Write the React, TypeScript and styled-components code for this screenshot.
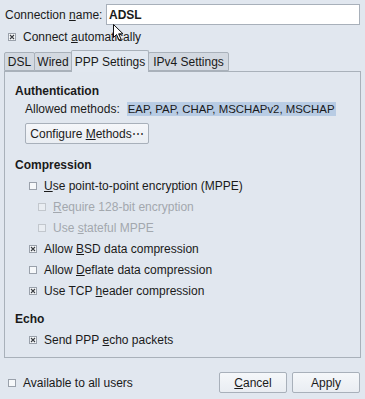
import React from "react";
import styled, { createGlobalStyle } from "styled-components";

const GlobalStyle = createGlobalStyle`
  html, body { margin: 0; padding: 0; }
  body {
    background: #e1e7ef;
    font-family: "Liberation Sans", Arial, sans-serif;
    font-size: 12px;
    color: #1a1a1a;
  }
`;

const Window = styled.div`
  position: relative;
  width: 365px;
  height: 399px;
  box-sizing: border-box;
  padding: 4px 4px 0 4px;
  display: flex;
  flex-direction: column;
  background: #e1e7ef;
`;

const NameRow = styled.div`
  display: flex;
  align-items: center;
  height: 21px;
`;

const Label = styled.span`
  width: 101px;
  padding-left: 1px;
`;

const TextInput = styled.div`
  flex: 1;
  height: 21px;
  box-sizing: border-box;
  margin-right: 1px;
  background: #ffffff;
  border: 1px solid #a8b0ba;
  display: flex;
  align-items: center;
  padding-left: 2px;
  font-weight: bold;
`;

const CheckRow = styled.div<{ $indent: number; $h?: number; $top?: number; $disabled?: boolean }>`
  display: flex;
  align-items: center;
  gap: 7px;
  height: ${(p) => p.$h ?? 21}px;
  margin-top: ${(p) => p.$top ?? 0}px;
  padding-left: ${(p) => p.$indent}px;
  color: ${(p) => (p.$disabled ? "#a3a8ae" : "#1a1a1a")};
`;

const Box = styled.span<{ $disabled?: boolean }>`
  width: 8px;
  height: 8px;
  box-sizing: border-box;
  border: 1px solid ${(p) => (p.$disabled ? "#c2c7cd" : "#9aa1ab")};
  background: ${(p) => (p.$disabled ? "#e9edf2" : "#f6f8fa")};
  display: flex;
  align-items: center;
  justify-content: center;
`;

const TabBar = styled.div`
  display: flex;
  align-items: flex-end;
  height: 21px;
  margin-top: 4px;
  position: relative;
  z-index: 1;
`;

const Tab = styled.div<{ $active?: boolean; $w: number }>`
  width: ${(p) => p.$w}px;
  box-sizing: border-box;
  height: ${(p) => (p.$active ? 22 : 19)}px;
  margin-bottom: ${(p) => (p.$active ? -1 : 0)}px;
  margin-left: -1px;
  border: 1px solid #a9b1ba;
  border-bottom: ${(p) => (p.$active ? "none" : "1px solid #a9b1ba")};
  border-radius: 2px 2px 0 0;
  background: ${(p) => (p.$active ? "#e2e8f0" : "#d3d9e1")};
  display: flex;
  align-items: center;
  justify-content: center;
  padding-top: 1px;
  &:first-child { margin-left: 0; }
`;

const Panel = styled.div`
  height: 287px;
  box-sizing: border-box;
  border: 1px solid #a9b1ba;
  background: #e1e7ef;
  padding: 11px 0 0 10px;
  display: flex;
  flex-direction: column;
`;

const Header = styled.div<{ $top?: number }>`
  font-weight: bold;
  height: 16px;
  line-height: 16px;
  margin-top: ${(p) => p.$top ?? 0}px;
`;

const MethodsRow = styled.div`
  display: flex;
  align-items: center;
  height: 18px;
  margin-top: 1px;
  padding-left: 10px;
`;

const Selected = styled.span`
  margin-left: 7px;
  background: #b8cce4;
  padding: 1px 1px;
  font-size: 11.4px;
`;

const Button = styled.div<{ $w: number; $top?: number; $indent?: number }>`
  width: ${(p) => p.$w}px;
  height: 21px;
  box-sizing: border-box;
  margin-top: ${(p) => p.$top ?? 0}px;
  margin-left: ${(p) => p.$indent ?? 0}px;
  border: 1px solid #a8b0ba;
  border-radius: 2px;
  background: linear-gradient(#f5f7fa, #e9edf2);
  display: flex;
  align-items: center;
  justify-content: center;
`;

const Footer = styled.div`
  display: flex;
  align-items: center;
  height: 21px;
  margin-top: 14px;
  padding-right: 1px;
`;

const FooterCheck = styled.div`
  flex: 1;
  display: flex;
  align-items: center;
  gap: 7px;
  padding-left: 4px;
`;

const ButtonGroup = styled.div`
  display: flex;
  gap: 5px;
`;

const Cursor = styled.svg`
  position: absolute;
  left: 113px;
  top: 24px;
`;

const U = styled.span`
  text-decoration: underline;
  text-underline-offset: 1px;
`;

function Check({ checked, disabled }: { checked?: boolean; disabled?: boolean }) {
  return (
    <Box $disabled={disabled}>
      {checked && (
        <svg width="6" height="6" viewBox="0 0 6 6">
          <path d="M1 1L5 5M5 1L1 5" stroke="#3a3d42" strokeWidth="1.1" />
        </svg>
      )}
    </Box>
  );
}

export default function App() {
  return (
    <>
      <GlobalStyle />
      <Window>
        <NameRow>
          <Label>
            Connection <U>n</U>ame:
          </Label>
          <TextInput>ADSL</TextInput>
        </NameRow>
        <CheckRow $indent={4} $h={18} $top={3}>
          <Check checked />
          <span>
            Connect <U>a</U>utomatically
          </span>
        </CheckRow>
        <TabBar>
          <Tab $w={31}>DSL</Tab>
          <Tab $w={38}>Wired</Tab>
          <Tab $w={78} $active>
            PPP Settings
          </Tab>
          <Tab $w={81}>IPv4 Settings</Tab>
        </TabBar>
        <Panel>
          <Header>Authentication</Header>
          <MethodsRow>
            Allowed methods:
            <Selected>EAP, PAP, CHAP, MSCHAPv2, MSCHAP</Selected>
          </MethodsRow>
          <Button $w={124} $top={5} $indent={10}>
            <span>
              Configure <U>M</U>ethods⋯
            </span>
          </Button>
          <Header $top={13}>Compression</Header>
          <CheckRow $indent={14} $top={2}>
            <Check />
            <span>
              <U>U</U>se point-to-point encryption (MPPE)
            </span>
          </CheckRow>
          <CheckRow $indent={23} $disabled>
            <Check disabled />
            <span>
              <U>R</U>equire 128-bit encryption
            </span>
          </CheckRow>
          <CheckRow $indent={23} $disabled>
            <Check disabled />
            <span>
              Use <U>s</U>tateful MPPE
            </span>
          </CheckRow>
          <CheckRow $indent={14}>
            <Check checked />
            <span>
              Allow <U>B</U>SD data compression
            </span>
          </CheckRow>
          <CheckRow $indent={14}>
            <Check />
            <span>
              Allow <U>D</U>eflate data compression
            </span>
          </CheckRow>
          <CheckRow $indent={14}>
            <Check checked />
            <span>
              Use TCP <U>h</U>eader compression
            </span>
          </CheckRow>
          <Header $top={10}>Echo</Header>
          <CheckRow $indent={14} $top={2}>
            <Check checked />
            <span>
              Send PPP <U>e</U>cho packets
            </span>
          </CheckRow>
        </Panel>
        <Footer>
          <FooterCheck>
            <Check />
            <span>Available to all users</span>
          </FooterCheck>
          <ButtonGroup>
            <Button $w={68}>
              <span>
                <U>C</U>ancel
              </span>
            </Button>
            <Button $w={68}>Apply</Button>
          </ButtonGroup>
        </Footer>
        <Cursor width="12" height="17" viewBox="0 0 12 17">
          <path
            d="M0.5 0.5 L0.5 13.5 L3.5 10.5 L6 16 L8 15 L5.6 9.8 L10 9.8 Z"
            fill="#ffffff"
            stroke="#111111"
            strokeWidth="1"
            strokeLinejoin="miter"
          />
        </Cursor>
      </Window>
    </>
  );
}
